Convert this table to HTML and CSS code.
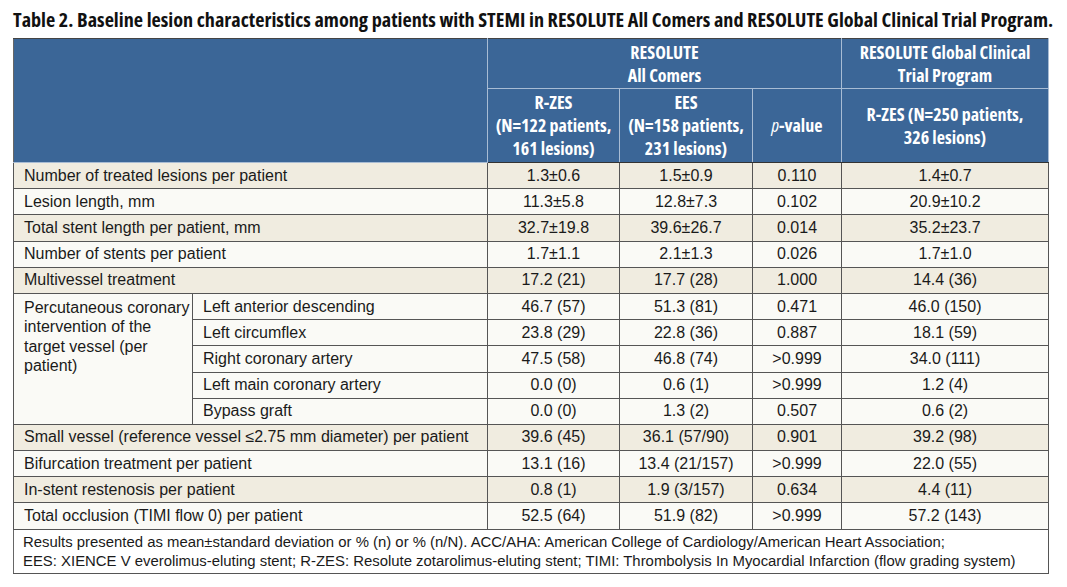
FILE: index.html
```html
<!DOCTYPE html>
<html>
<head>
<meta charset="utf-8">
<link rel="stylesheet" href="styles.css">
</head>
<body>
<div class="page">
<h1 class="title">Table 2. Baseline lesion characteristics among patients with STEMI in RESOLUTE All Comers and RESOLUTE Global Clinical Trial Program.</h1>
<table class="tbl">
<colgroup>
<col class="c-a"><col class="c-b"><col class="c-rzes"><col class="c-ees"><col class="c-p"><col class="c-glob">
</colgroup>
<thead>
<tr class="h1row">
<th class="blank" colspan="2" rowspan="2"></th>
<th colspan="3">RESOLUTE<br>All Comers</th>
<th>RESOLUTE Global Clinical<br>Trial Program</th>
</tr>
<tr class="h2row">
<th>R-ZES<br>(N=122 patients,<br>161 lesions)</th>
<th>EES<br>(N=158 patients,<br>231 lesions)</th>
<th><i>p</i>-value</th>
<th>R-ZES (N=250 patients,<br>326 lesions)</th>
</tr>
</thead>
<tbody>
<tr class="odd"><td colspan="2" class="lab">Number of treated lesions per patient</td><td>1.3±0.6</td><td>1.5±0.9</td><td>0.110</td><td>1.4±0.7</td></tr>
<tr class="even"><td colspan="2" class="lab">Lesion length, mm</td><td>11.3±5.8</td><td>12.8±7.3</td><td>0.102</td><td>20.9±10.2</td></tr>
<tr class="odd"><td colspan="2" class="lab">Total stent length per patient, mm</td><td>32.7±19.8</td><td>39.6±26.7</td><td>0.014</td><td>35.2±23.7</td></tr>
<tr class="even"><td colspan="2" class="lab">Number of stents per patient</td><td>1.7±1.1</td><td>2.1±1.3</td><td>0.026</td><td>1.7±1.0</td></tr>
<tr class="odd"><td colspan="2" class="lab">Multivessel treatment</td><td>17.2 (21)</td><td>17.7 (28)</td><td>1.000</td><td>14.4 (36)</td></tr>
<tr class="even"><td rowspan="5" class="lab group">Percutaneous coronary<br>intervention of the<br>target vessel (per<br>patient)</td><td class="lab">Left anterior descending</td><td>46.7 (57)</td><td>51.3 (81)</td><td>0.471</td><td>46.0 (150)</td></tr>
<tr class="even"><td class="lab">Left circumflex</td><td>23.8 (29)</td><td>22.8 (36)</td><td>0.887</td><td>18.1 (59)</td></tr>
<tr class="even"><td class="lab">Right coronary artery</td><td>47.5 (58)</td><td>46.8 (74)</td><td>&gt;0.999</td><td>34.0 (111)</td></tr>
<tr class="even"><td class="lab">Left main coronary artery</td><td>0.0 (0)</td><td>0.6 (1)</td><td>&gt;0.999</td><td>1.2 (4)</td></tr>
<tr class="even"><td class="lab">Bypass graft</td><td>0.0 (0)</td><td>1.3 (2)</td><td>0.507</td><td>0.6 (2)</td></tr>
<tr class="odd"><td colspan="2" class="lab">Small vessel (reference vessel ≤2.75 mm diameter) per patient</td><td>39.6 (45)</td><td>36.1 (57/90)</td><td>0.901</td><td>39.2 (98)</td></tr>
<tr class="even"><td colspan="2" class="lab">Bifurcation treatment per patient</td><td>13.1 (16)</td><td>13.4 (21/157)</td><td>&gt;0.999</td><td>22.0 (55)</td></tr>
<tr class="odd"><td colspan="2" class="lab">In-stent restenosis per patient</td><td>0.8 (1)</td><td>1.9 (3/157)</td><td>0.634</td><td>4.4 (11)</td></tr>
<tr class="even"><td colspan="2" class="lab">Total occlusion (TIMI flow 0) per patient</td><td>52.5 (64)</td><td>51.9 (82)</td><td>&gt;0.999</td><td>57.2 (143)</td></tr>
<tr class="foot"><td colspan="6">Results presented as mean±standard deviation or % (n) or % (n/N). ACC/AHA: American College of Cardiology/American Heart Association;<br>EES: XIENCE V everolimus-eluting stent; R-ZES: Resolute zotarolimus-eluting stent; TIMI: Thrombolysis In Myocardial Infarction (flow grading system)</td></tr>
</tbody>
</table>
</div>
</body>
</html>
```
FILE: styles.css
```css
html, body {
  margin: 0;
  padding: 0;
  background: #ffffff;
}
.page {
  padding: 8px 0 0 13px;
}
.title {
  margin: 0 0 8px 0;
  font-family: "Open Sans", "Liberation Sans", sans-serif;
  font-stretch: 75%;
  font-weight: bold;
  font-size: 20.2px;
  line-height: 22px;
  color: #111;
  white-space: nowrap;
}
.tbl {
  border-collapse: collapse;
  width: 1035px;
  table-layout: fixed;
  font-family: "Liberation Sans", Arial, sans-serif;
  font-size: 16px;
  color: #1a1a1a;
  border: 1px solid #666;
}
.c-a { width: 179px; }
.c-b { width: 295px; }
.c-rzes { width: 132px; }
.c-ees { width: 133px; }
.c-p { width: 89px; }
.c-glob { width: 207px; }
.tbl th {
  background: #3b6697;
  color: #ffffff;
  font-family: "Open Sans", "Liberation Sans", sans-serif;
  font-stretch: 75%;
  font-weight: bold;
  font-size: 18px;
  line-height: 23px;
  text-align: center;
  border: 1px solid #a8bcd4;
  padding: 0;
  white-space: nowrap;
}
.tbl th i {
  font-weight: normal;
  font-style: italic;
}
.tbl th.blank {
  border-left: 1px solid #666;
}
.h1row th {
  height: 49px;
  border-top: 1px solid #444;
}
.h2row th {
  height: 73px;
  border-bottom: 1px solid #333;
}
.tbl td {
  height: 25.2px;
  padding: 0;
  text-align: center;
  line-height: 18px;
  border: 1px solid #555;
  border-top-color: #444;
}
.tbl td.lab {
  text-align: left;
  padding-left: 10px;
  white-space: nowrap;
}
.tbl td.group {
  vertical-align: top;
  padding-top: 4px;
  line-height: 19.4px;
}
.odd td {
  background: #f0ece0;
}
.even td {
  background: #fafaf6;
}
.foot td {
  background: #ffffff;
  text-align: left;
  padding: 3px 8px 2px 9px;
  font-size: 14.9px;
  line-height: 19px;
  border-top: 1px solid #444;
  border-left: 1px solid #666;
}
```
